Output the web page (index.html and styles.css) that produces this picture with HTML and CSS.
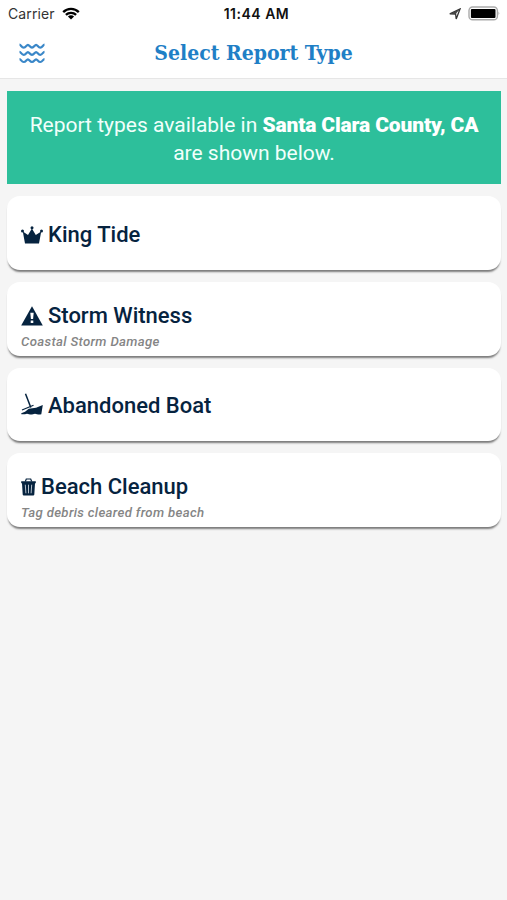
FILE: index.html
```html
<!DOCTYPE html>
<html lang="en">
<head>
  <meta charset="UTF-8" />
  <meta name="viewport" content="width=device-width, initial-scale=1.0"/>
  <title>Select Report Type</title>
  <link rel="stylesheet" href="styles.css">
</head>
<body>

  <header>
    <div class="status">
      <div class="carrier">
        <span class="carrier-name">Carrier</span>
        <svg width="18" height="13" viewBox="0 0 18 13">
          <path d="M1.2 5.1a11 11 0 0 1 15.6 0M3.9 7.9a7.2 7.2 0 0 1 10.2 0" fill="none" stroke="#000" stroke-width="2.3"/>
          <path d="M9 12.6 5.9 9.5a4.4 4.4 0 0 1 6.2 0z"/>
        </svg>
      </div>
      <span class="time">11:44 AM</span>
      <div class="power">
        <svg width="12" height="12" viewBox="0 0 12 12">
          <path d="M.8 5.900 11 1 7.200 11 6.600 6z" fill="none" stroke="#333" stroke-width="1.3"/>
          <path d="M.8 5.900 11 1 6.600 6z" fill="#444"/>
        </svg>
        <svg width="33" height="15" viewBox="0 0 33 15">
          <rect x="1" y="1" width="28.4" height="12.8" rx="3.6" fill="#fff" stroke="#aaa" stroke-width="1.4"/>
          <rect x="2.900" y="2.900" width="24.600" height="9" rx="1"/>
          <path d="M30.600 5.600q1.400 1.800 0 3.600z" fill="#888"/>
        </svg>
      </div>
    </div>
    <div class="navbar">
      <svg class="waves" width="26" height="21" viewBox="0 0 26 21">
        <g fill="none" stroke="#3a87c8" stroke-width="2.2">
          <path d="M.5 1.700C2 1.700 2.500 4.600 4.700 4.600S7.500 1.900 8.900 1.900 11 4.600 13 4.600s2.700-2.700 4.100-2.700 2.100 2.700 4.200 2.700S24 1.700 25.500 1.700"/>
          <path d="M.5 8.900C2 8.900 2.500 11.800 4.700 11.800S7.500 9.100 8.900 9.100 11 11.800 13 11.800s2.700-2.700 4.100-2.700 2.100 2.700 4.200 2.700S24 8.900 25.500 8.900"/>
          <path d="M.5 16.100C2 16.100 2.500 19 4.700 19S7.500 16.300 8.900 16.300 11 19 13 19s2.700-2.700 4.100-2.700 2.100 2.700 4.200 2.700S24 16.100 25.500 16.100"/>
        </g>
      </svg>
      <h1>Select Report Type</h1>
    </div>
  </header>

  <main>
    <p class="banner">Report types available in <strong>Santa Clara County, CA</strong><br>are shown below.</p>

    <div class="card">
      <div class="card-title">
        <svg width="22" height="18" viewBox="0 0 22 18">
          <path d="M4 17.500 1.800 5.500 7 9 10.900 2.500 14.800 9 20.200 5.500 18 17.500z"/>
          <circle cx="11" cy="1.700" r="1.500"/>
          <circle cx="1.500" cy="5" r="1.500"/>
          <circle cx="20.500" cy="5" r="1.500"/>
        </svg>
        <h2>King Tide</h2>
      </div>
    </div>

    <div class="card with-note">
      <div class="card-title">
        <svg width="22" height="20" viewBox="0 0 22 20">
          <path d="M11 .3 21.800 19.500H.2z"/>
          <path d="M9.300 6.800h3.400l-.6 6.300H9.900zM9.700 14.500h2.600V17H9.700z" fill="#fff"/>
        </svg>
        <h2>Storm Witness</h2>
      </div>
      <p class="note">Coastal Storm Damage</p>
    </div>

    <div class="card">
      <div class="card-title boat">
        <svg width="22" height="22" viewBox="0 0 22 22">
          <path d="M4.500.8 9.800 14.500" fill="none" stroke="#06233f" stroke-width="1.5"/>
          <path d="M1 17 12.500 12.300" fill="none" stroke="#06233f" stroke-width="1.2"/>
          <path d="M.3 20.200 4 18.700 7.800 15.800 15 14.700 21.800 12 20.300 21.200Q18 21.900 16 21.200T12 21.200 8 21.200 4 21.200L.3 21.200z"/>
        </svg>
        <h2>Abandoned Boat</h2>
      </div>
    </div>

    <div class="card with-note">
      <div class="card-title">
        <svg width="15" height="18" viewBox="0 0 15 18">
          <path d="M4.300 3.500 5.300 1h4.400l1 2.500" fill="none" stroke="#06233f" stroke-width="1.2"/>
          <path d="M.2 3.300h14.600v2H14L13.300 16.500Q13.200 17.500 12.200 17.500H2.800Q1.800 17.500 1.700 16.500L1 5.300H.2z"/>
          <path d="M4.300 6.700 4.900 15.300M7.500 6.700v8.600M10.700 6.700 10.100 15.300" fill="none" stroke="#b5c0cb" stroke-width="1"/>
        </svg>
        <h2>Beach Cleanup</h2>
      </div>
      <p class="note">Tag debris cleared from beach</p>
    </div>
  </main>

</body>
</html>
```
FILE: styles.css
```css
* {
  box-sizing: border-box;
}

body {
  margin: 0;
  min-height: 900px;
  background: #f5f5f5;
  font-family: Roboto, sans-serif;
  color: #06233f;
}

h1, h2, p {
  margin: 0;
}

svg {
  display: block;
  flex: none;
}

header {
  height: 79px;
  background: #fff;
  border-bottom: 1px solid #e6e6e6;
}

.status {
  display: grid;
  grid-template-columns: 1fr auto 1fr;
  align-items: center;
  height: 27px;
  padding: 0 6px 0 8px;
  font-family: Inter, sans-serif;
  font-size: 14px;
  color: #111;
}

.carrier {
  display: flex;
  align-items: center;
  gap: 7px;
}

.carrier-name {
  color: #333;
  letter-spacing: 0.1px;
}

.time {
  padding-left: 4px;
  font-weight: 600;
  letter-spacing: 0.5px;
}

.power {
  display: flex;
  align-items: center;
  justify-content: flex-end;
  gap: 7px;
}

.navbar {
  display: grid;
  grid-template-columns: 45px 1fr 45px;
  align-items: center;
  height: 52px;
}

.waves {
  margin-left: 19px;
}

h1 {
  font-family: "DejaVu Serif Condensed", "DejaVu Serif", serif;
  font-size: 21px;
  font-weight: bold;
  line-height: 28px;
  text-align: center;
  white-space: nowrap;
  color: #1f7fc6;
}

main {
  display: flex;
  flex-direction: column;
  gap: 12px;
  padding: 12.4px 6px 0 7px;
}

.banner {
  height: 93px;
  padding-top: 19.4px;
  background: #2dbf9b;
  color: #f1fffb;
  font-size: 21px;
  line-height: 28px;
  text-align: center;
  white-space: nowrap;
}

.banner strong {
  font-weight: 900;
  letter-spacing: -0.15px;
  color: #fff;
}

.card {
  display: flex;
  flex-direction: column;
  justify-content: center;
  height: 73.6px;
  padding: 3px 14px 0;
  background: #fff;
  border-radius: 13px;
  box-shadow: 0 3px 2px -1px rgba(0, 0, 0, 0.5);
}

.with-note {
  justify-content: flex-start;
  padding-top: 20px;
}

.card-title {
  display: flex;
  align-items: center;
  gap: 5px;
}

.card-title svg {
  fill: #06233f;
}

.boat svg {
  margin-top: -3px;
}

h2 {
  font-size: 22px;
  font-weight: 500;
  line-height: 28px;
  white-space: nowrap;
}

.note {
  margin-top: 4px;
  font-size: 13.2px;
  font-style: italic;
  font-weight: 500;
  line-height: 16px;
  letter-spacing: 0.33px;
  color: #858585;
}
```
